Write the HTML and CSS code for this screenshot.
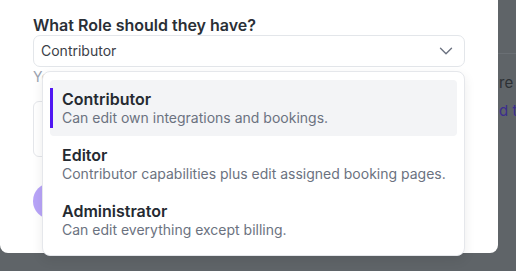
FILE: index.html
```html
<!DOCTYPE html>
<html lang="en">
<head>
    <meta charset="UTF-8">
    <meta name="viewport" content="width=device-width, initial-scale=1.0">
    <title>Invite member</title>
    <link rel="stylesheet" href="styles.css">
</head>
<body>
    <!-- page behind the modal (dimmed) -->
    <div class="page">
        <div class="page-header"></div>
        <div class="page-body">
            <div class="page-main"></div>
            <div class="page-side">
                <p class="side-text">re sent</p>
                <p class="side-link">d team</p>
            </div>
        </div>
    </div>

    <!-- invite modal -->
    <div class="modal">
        <label class="field-label">What Role should they have?</label>

        <div class="select-wrap">
            <div class="select">
                <span>Contributor</span>
                <svg class="chevron" width="16" height="16" viewBox="0 0 16 16">
                    <path d="M2.5 5.25 L8 10.75 L13.5 5.25" fill="none" stroke="#6b7280" stroke-width="1.4" stroke-linecap="round" stroke-linejoin="round"/>
                </svg>
            </div>

            <!-- opened role menu -->
            <ul class="menu">
                <li class="option active">
                    <div class="option-title">Contributor</div>
                    <div class="option-desc">Can edit own integrations and bookings.</div>
                </li>
                <li class="option">
                    <div class="option-title">Editor</div>
                    <div class="option-desc">Contributor capabilities plus edit assigned booking pages.</div>
                </li>
                <li class="option">
                    <div class="option-title">Administrator</div>
                    <div class="option-desc">Can edit everything except billing.</div>
                </li>
            </ul>
        </div>

        <p class="helper">You can change their role later in settings.</p>

        <div class="message-box"></div>

        <button class="invite-btn" type="button">Send invite</button>
    </div>
</body>
</html>
```

FILE: styles.css
```css
/* page */
body {
    margin: 0;
    font-family: Inter, "Noto Sans", sans-serif;
    background-color: #5f6468;
    overflow: hidden;
    height: 271px;
    position: relative;
}

/* dimmed page in the back */
.page-header {
    height: 53px;
    border-bottom: 1px solid #6a6f74;
}

.page-body {
    display: flex;
}

.page-main {
    width: 499px;
    flex: none;
}

.page-side {
    flex: 1;
    overflow: hidden;
    white-space: nowrap;
    padding-top: 15px;
}

.page-side p {
    margin: 0;
    font-size: 15px;
    line-height: 28px;
}

.side-text {
    color: #2d3135;
}

.side-link {
    color: #3b2d8e;
}

/* modal */
.modal {
    position: absolute;
    left: 0;
    top: 0;
    width: 498px;
    height: 253px;
    box-sizing: border-box;
    padding: 15px 33px 0 33px;
    background: #fff;
    border-radius: 0 0 8px 8px;
}

.field-label {
    display: block;
    font-size: 16px;
    font-weight: 600;
    line-height: 20px;
    color: #2a2f36;
}

/* select */
.select-wrap {
    position: relative;
}

.select {
    display: flex;
    align-items: center;
    justify-content: space-between;
    height: 32px;
    box-sizing: border-box;
    padding: 5px 10px 5px 7px;
    border: 1px solid #e3e6ea;
    border-radius: 7px;
    font-size: 14px;
    line-height: 20px;
    color: #3b4048;
}

.chevron {
    display: block;
}

/* dropdown menu */
.menu {
    position: absolute;
    top: 36px;
    left: 9px;
    right: 0;
    z-index: 2;
    margin: 0;
    padding: 8px 7px 7px 7px;
    list-style: none;
    background: #fff;
    border: 1px solid #e5e7eb;
    border-radius: 8px;
    box-shadow: 0 4px 12px rgba(0, 0, 0, 0.08);
}

.option {
    position: relative;
    padding: 9px 12px;
    border-radius: 4px;
    white-space: nowrap;
}

.option.active {
    background: #f3f4f6;
}

.option.active::before {
    content: "";
    position: absolute;
    left: 0;
    top: 8px;
    bottom: 8px;
    width: 3px;
    background: #5016f2;
}

.option-title {
    font-size: 16px;
    font-weight: 600;
    line-height: 20px;
    color: #252a31;
}

.option-desc {
    font-size: 14px;
    line-height: 18px;
    color: #6b7280;
}

/* rest of the form (under the menu) */
.helper {
    margin: 1px 0 0 0;
    font-size: 14px;
    line-height: 18px;
    color: #9ca3af;
}

.message-box {
    margin-top: 15px;
    height: 56px;
    box-sizing: border-box;
    border: 1px solid #e5e7eb;
    border-radius: 6px;
}

.invite-btn {
    margin-top: 26px;
    height: 36px;
    padding: 0 24px;
    border: none;
    border-radius: 18px;
    background: #b8a4f8;
    color: #fff;
    font-family: inherit;
    font-size: 14px;
    font-weight: 600;
}
```
